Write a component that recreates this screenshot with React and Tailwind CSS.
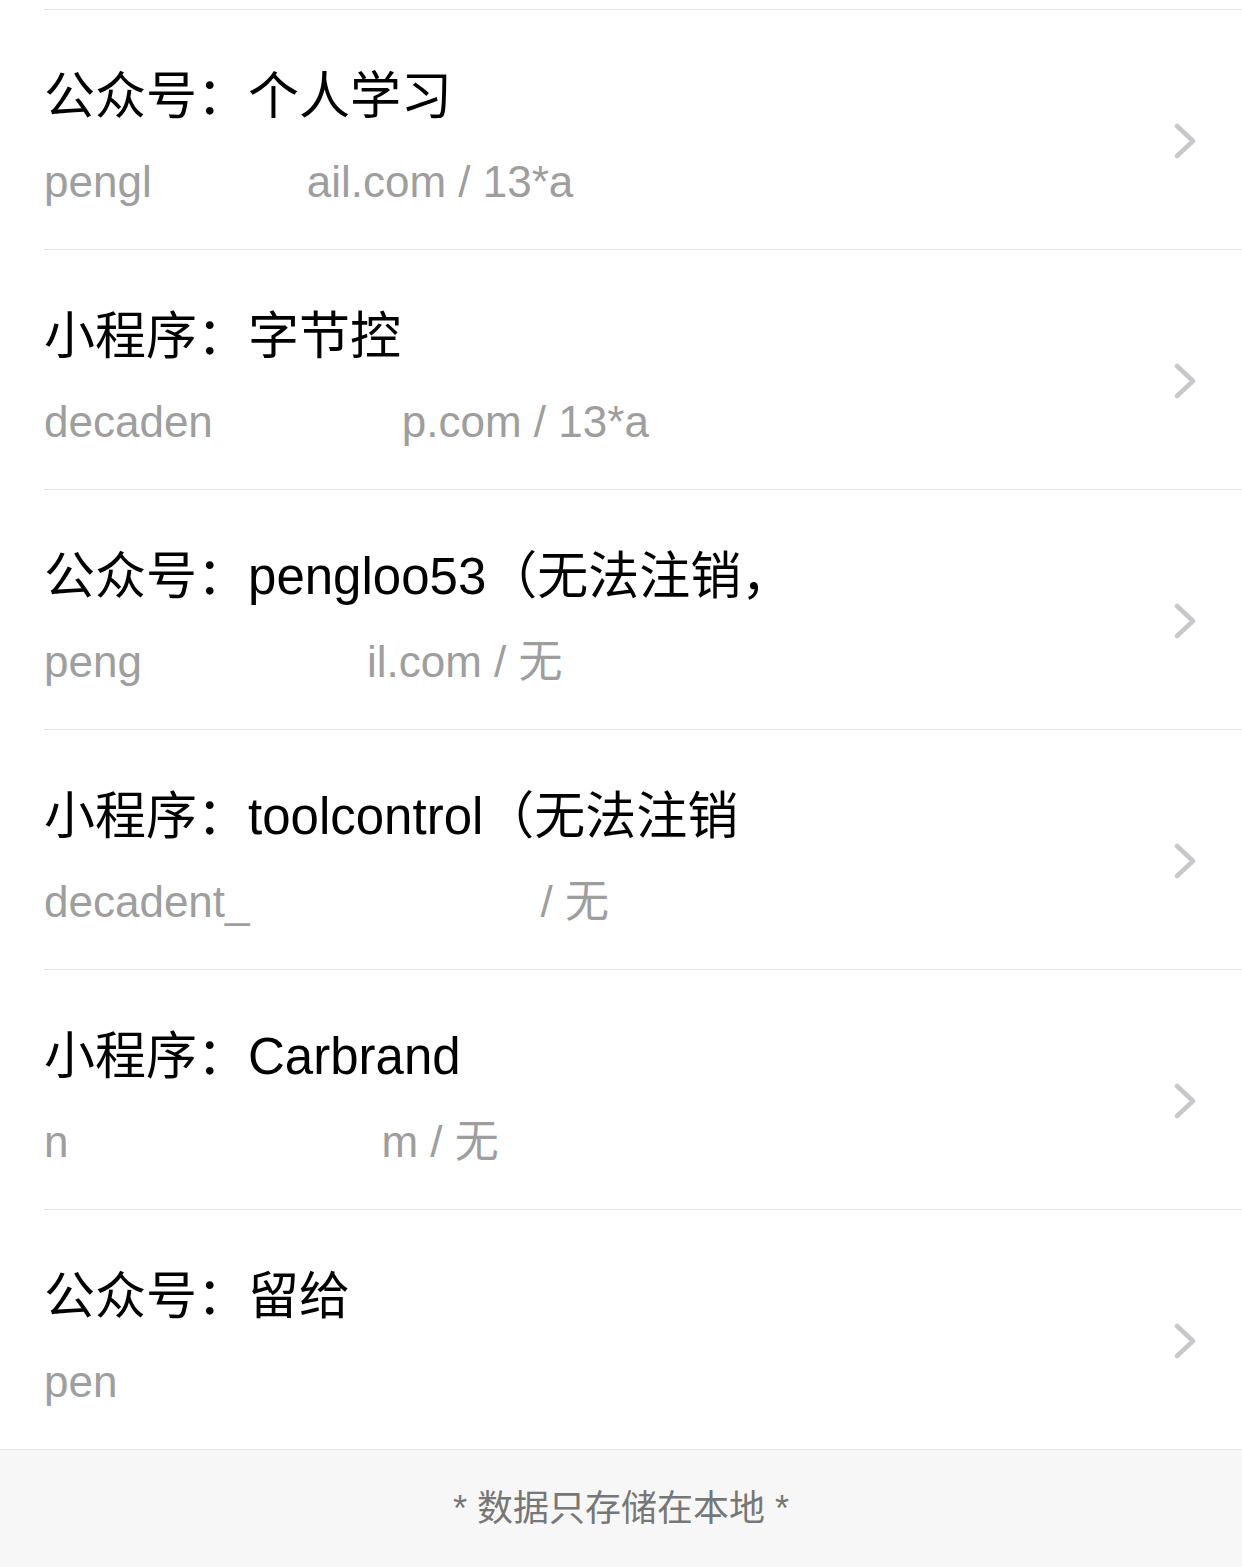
const items = [
  { type: "公众号", name: "个人学习", sub: ["pengl", "ail.com / 13*a"], gap: 155 },
  { type: "小程序", name: "字节控", sub: ["decaden", "p.com / 13*a"], gap: 189 },
  { type: "公众号", name: "pengloo53（无法注销，", sub: ["peng", "il.com / 无"], gap: 225 },
  { type: "小程序", name: "toolcontrol（无法注销", sub: ["decadent_", "/ 无"], gap: 291 },
  { type: "小程序", name: "Carbrand", sub: ["n", "m / 无"], gap: 313 },
  { type: "公众号", name: "留给", sub: ["pen", ""], gap: 0 },
];

function Chevron() {
  return (
    <svg width="24" height="36" viewBox="0 0 24 36" fill="none">
      <polyline points="3,3 19,18 3,33" stroke="#c7c7cc" strokeWidth="4.5" strokeLinecap="round" strokeLinejoin="round" />
    </svg>
  );
}

function Row({ item }) {
  return (
    <div className="flex border-t border-[#e5e5e5] h-[240px]">
      <div className="flex-1 flex flex-col pt-[61px]">
        <div className="text-[51px] leading-[52px] text-black whitespace-nowrap">
          {item.type}：{item.name}
        </div>
        <div className="mt-[37px] text-[44px] leading-[44px] text-[#9e9e9e] whitespace-nowrap">
          <span>{item.sub[0]}</span>
          <span className="inline-block" style={{ width: item.gap }}></span>
          <span>{item.sub[1]}</span>
        </div>
      </div>
      <div className="flex items-center pr-[44px] pt-[22px]">
        <Chevron />
      </div>
    </div>
  );
}

export default function App() {
  return (
    <div className="w-[1242px] min-h-[1567px] bg-white flex flex-col font-['Liberation_Sans','Noto_Sans_CJK_SC',sans-serif]">
      <div className="pt-[9px] pl-[44px]">
        {items.map((item, i) => (
          <Row key={i} item={item} />
        ))}
      </div>
      <div className="flex-1 bg-[#f7f7f7] border-t border-[#e5e5e5] flex items-center justify-center text-[36px] text-[#777777]">
        * 数据只存储在本地 *
      </div>
    </div>
  );
}
